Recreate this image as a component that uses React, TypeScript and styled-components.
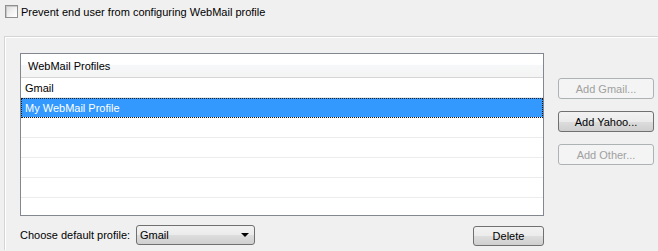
import React from 'react';
import styled, { createGlobalStyle } from 'styled-components';

const GlobalStyle = createGlobalStyle`
  html, body {
    margin: 0;
    padding: 0;
    background: #f0f0f0;
  }
  body {
    font-family: "Liberation Sans", Arial, sans-serif;
    font-size: 11px;
    color: #000;
  }
`;

const Screen = styled.div`
  width: 658px;
  height: 251px;
  overflow: hidden;
  background: #f0f0f0;
`;

const TopRow = styled.label`
  display: flex;
  align-items: center;
  gap: 3px;
  padding: 5px 0 0 5px;
  height: 13px;
`;

const CheckBox = styled.span`
  width: 11px;
  height: 11px;
  border: 1px solid #8e8f8f;
  background: linear-gradient(135deg, #dcdcdc 0%, #f4f4f4 60%, #ffffff 100%);
  box-shadow: inset 1px 1px 0 #c8c8c8;
`;

const Panel = styled.div`
  margin: 18px 0 0 4px;
  height: 214px;
  border-top: 1px solid #d5d5d5;
  border-left: 1px solid #d5d5d5;
  box-shadow: inset 1px 1px 0 #ffffff;
  display: flex;
  padding: 16px 0 0 15px;
  box-sizing: border-box;
`;

const LeftCol = styled.div`
  width: 524px;
  display: flex;
  flex-direction: column;
`;

const List = styled.div`
  height: 163px;
  border: 1px solid #828790;
  background: #ffffff;
  box-sizing: border-box;
  overflow: hidden;
`;

const Header = styled.div`
  height: 24px;
  box-sizing: border-box;
  padding-left: 7px;
  display: flex;
  align-items: center;
  border-bottom: 1px solid #d5d5d5;
  background: linear-gradient(#ffffff 0%, #ffffff 45%, #f6f7f8 50%, #f4f4f4 100%);
`;

const Row = styled.div<{ $selected?: boolean }>`
  height: 20px;
  box-sizing: border-box;
  padding-left: 4px;
  display: flex;
  align-items: center;
  border-bottom: 1px solid #ececec;
  color: ${p => (p.$selected ? '#ffffff' : '#000000')};
  background: ${p => (p.$selected ? '#3399ff' : 'transparent')};
  outline: ${p => (p.$selected ? '1px dotted #1a1a1a' : 'none')};
  outline-offset: -1px;
`;

const BottomRow = styled.div`
  display: flex;
  align-items: center;
  margin-top: 8px;
  height: 21px;
`;

const Label = styled.span`
  width: 116px;
`;

const Select = styled.div`
  width: 119px;
  height: 20px;
  box-sizing: border-box;
  border: 1px solid #707070;
  border-radius: 3px;
  background: linear-gradient(#f2f2f2 0%, #ebebeb 50%, #dddddd 51%, #cfcfcf 100%);
  display: flex;
  align-items: center;
  justify-content: space-between;
  padding: 0 5px 0 3px;
`;

const Arrow = styled.span`
  width: 0;
  height: 0;
  border-left: 4px solid transparent;
  border-right: 4px solid transparent;
  border-top: 4px solid #000;
`;

const Button = styled.button<{ $disabled?: boolean }>`
  width: 96px;
  height: 21px;
  box-sizing: border-box;
  padding: 0;
  font: inherit;
  border-radius: 3px;
  border: 1px solid ${p => (p.$disabled ? '#adb2b5' : '#707070')};
  color: ${p => (p.$disabled ? '#a0a0a0' : '#000000')};
  background: ${p =>
    p.$disabled
      ? '#f4f4f4'
      : 'linear-gradient(#f2f2f2 0%, #ebebeb 50%, #dddddd 51%, #cfcfcf 100%)'};
`;

const DeleteButton = styled(Button)`
  width: 71px;
  height: 20px;
  margin-left: auto;
  margin-top: 2px;
`;

const ButtonCol = styled.div`
  margin-left: 14px;
  padding-top: 25px;
  display: flex;
  flex-direction: column;
  gap: 12px;
`;

const App = () => {
  const rows = ['Gmail', 'My WebMail Profile', '', '', '', '', ''];

  return (
    <Screen>
      <GlobalStyle />
      <TopRow>
        <CheckBox />
        <span>Prevent end user from configuring WebMail profile</span>
      </TopRow>
      <Panel>
        <LeftCol>
          <List>
            <Header>WebMail Profiles</Header>
            {rows.map((r, i) => (
              <Row key={i} $selected={i === 1}>
                {r}
              </Row>
            ))}
          </List>
          <BottomRow>
            <Label>Choose default profile:</Label>
            <Select>
              <span>Gmail</span>
              <Arrow />
            </Select>
            <DeleteButton>Delete</DeleteButton>
          </BottomRow>
        </LeftCol>
        <ButtonCol>
          <Button $disabled>Add Gmail...</Button>
          <Button>Add Yahoo...</Button>
          <Button $disabled>Add Other...</Button>
        </ButtonCol>
      </Panel>
    </Screen>
  );
};

export default App;
